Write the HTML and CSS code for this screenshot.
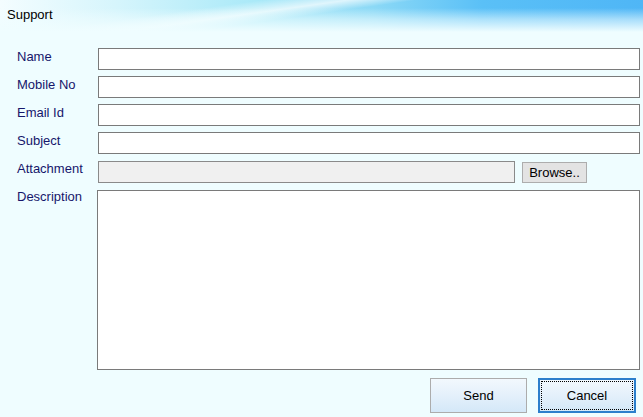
FILE: index.html
```html
<!DOCTYPE html>
<html>
<head>
<meta charset="utf-8">
<title>Support</title>
<link rel="stylesheet" href="styles.css">
</head>
<body>
<div class="window">
  <div class="titlebar">Support</div>
  <form class="form">
    <label class="label">Name</label>
    <input class="field" type="text">
    <label class="label">Mobile No</label>
    <input class="field" type="text">
    <label class="label">Email Id</label>
    <input class="field" type="text">
    <label class="label">Subject</label>
    <input class="field" type="text">
    <label class="label">Attachment</label>
    <div class="attach">
      <input class="field field-disabled" type="text" disabled>
      <button type="button" class="browse">Browse..</button>
    </div>
    <label class="label label-desc">Description</label>
    <textarea class="desc"></textarea>
    <div class="actions">
      <button type="button" class="btn">Send</button>
      <button type="button" class="btn btn-focus"><span class="focus-ring">Cancel</span></button>
    </div>
  </form>
</div>
</body>
</html>
```
FILE: styles.css
```css
html, body {
  margin: 0;
  padding: 0;
}
body {
  width: 643px;
  height: 417px;
  overflow: hidden;
  background: #effdff;
  font-family: "Liberation Sans", Arial, sans-serif;
  font-size: 13px;
}
.window {
  width: 643px;
  height: 417px;
  background: #effdff;
}
.titlebar {
  height: 32px;
  box-sizing: border-box;
  padding: 7px 7px 0;
  line-height: 15px;
  color: #000;
  background:
    linear-gradient(to bottom, rgba(239,253,255,0) 0%, rgba(239,253,255,0) 25%, rgba(239,253,255,0.55) 60%, #effdff 100%),
    linear-gradient(172deg, rgba(255,255,255,0) 30%, rgba(255,255,255,0.7) 40%, rgba(255,255,255,0) 48%),
    linear-gradient(to right, #f4fdff 0%, #d6f5fc 18%, #a9e9f8 40%, #8cd9f6 58%, #5ac0f7 75%, #4fb6f6 100%);
}
.form {
  display: grid;
  grid-template-columns: 81px 1fr;
  row-gap: 6px;
  padding: 16px 3px 0 17px;
}
.label {
  color: #16166b;
  line-height: 15px;
  padding-top: 1px;
}
.field {
  box-sizing: border-box;
  height: 22px;
  margin: 0;
  border: 1px solid #7a7a7a;
  background: #fff;
  font: inherit;
  padding: 0 3px;
}
.attach {
  display: flex;
  align-items: flex-start;
  gap: 7px;
  margin-top: 1px;
}
.field-disabled {
  width: 417px;
  background: #f0f0f0;
  border-color: #8a8a8a;
}
.browse {
  box-sizing: border-box;
  width: 65px;
  height: 21px;
  margin: 1px 0 0;
  padding: 0;
  background: #e3e3e3;
  border: 1px solid #adadad;
  font: inherit;
  color: #000;
  line-height: 18px;
}
.label-desc {
  margin-top: -1px;
}
.desc {
  box-sizing: border-box;
  display: block;
  width: calc(100% + 1px);
  margin: 1px 0 0 -1px;
  height: 180px;
  border: 1px solid #7a7a7a;
  background: #fff;
  resize: none;
  font: inherit;
}
.actions {
  grid-column: 1 / span 2;
  display: flex;
  justify-content: flex-end;
  gap: 11px;
  margin-top: 2px;
  padding-right: 4px;
}
.btn {
  box-sizing: border-box;
  width: 97px;
  height: 35px;
  margin: 0;
  padding: 0;
  border: 1px solid #acacac;
  background: linear-gradient(to bottom, #f2f8fd 0%, #e4f0fb 50%, #d4e8f8 100%);
  font: inherit;
  color: #000;
}
.btn-focus {
  width: 98px;
  border: 2px solid #2c7fcc;
  padding: 1px;
  display: flex;
}
.focus-ring {
  flex: 1;
  display: flex;
  align-items: center;
  justify-content: center;
  border: 1px dotted #000;
}
```
